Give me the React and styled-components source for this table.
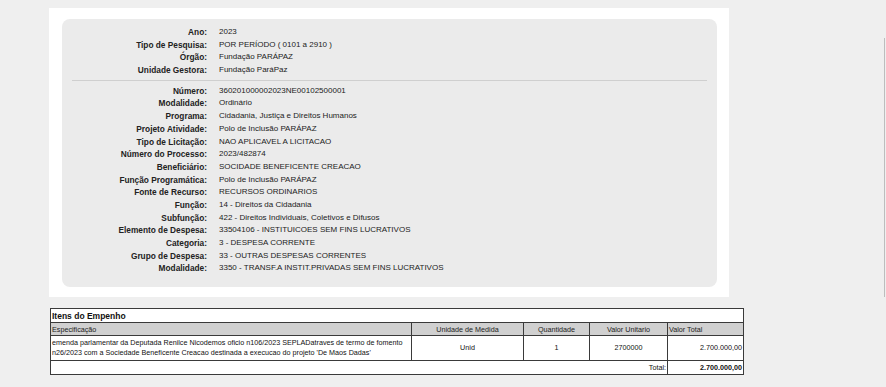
import React from "react";
import styled, { createGlobalStyle } from "styled-components";

const GlobalStyle = createGlobalStyle`
  html, body {
    margin: 0;
    padding: 0;
    background: #efefef;
    font-family: "Liberation Sans", Arial, sans-serif;
  }
`;

const cabecalho = [
  ["Ano", "2023"],
  ["Tipo de Pesquisa", "POR PERÍODO ( 0101 a 2910 )"],
  ["Órgão", "Fundação PARÁPAZ"],
  ["Unidade Gestora", "Fundação ParáPaz"],
];

const detalhes = [
  ["Número", "360201000002023NE00102500001"],
  ["Modalidade", "Ordinário"],
  ["Programa", "Cidadania, Justiça e Direitos Humanos"],
  ["Projeto Atividade", "Polo de Inclusão PARÁPAZ"],
  ["Tipo de Licitação", "NAO APLICAVEL A LICITACAO"],
  ["Número do Processo", "2023/482874"],
  ["Beneficiário", "SOCIDADE BENEFICENTE CREACAO"],
  ["Função Programática", "Polo de Inclusão PARÁPAZ"],
  ["Fonte de Recurso", "RECURSOS ORDINARIOS"],
  ["Função", "14 - Direitos da Cidadania"],
  ["Subfunção", "422 - Direitos Individuais, Coletivos e Difusos"],
  ["Elemento de Despesa", "33504106 - INSTITUICOES SEM FINS LUCRATIVOS"],
  ["Categoria", "3 - DESPESA CORRENTE"],
  ["Grupo de Despesa", "33 - OUTRAS DESPESAS CORRENTES"],
  ["Modalidade", "3350 - TRANSF.A INSTIT.PRIVADAS SEM FINS LUCRATIVOS"],
];

const App = () => {
  return (
    <>
      <GlobalStyle />
      <Page>
        <Panel>
          <Card>
            <Fields>
              {cabecalho.map(([label, value], i) => (
                <React.Fragment key={i}>
                  <Label>{label}:</Label>
                  <Value>{value}</Value>
                </React.Fragment>
              ))}
            </Fields>
            <Divider />
            <Fields>
              {detalhes.map(([label, value], i) => (
                <React.Fragment key={i}>
                  <Label>{label}:</Label>
                  <Value>{value}</Value>
                </React.Fragment>
              ))}
            </Fields>
          </Card>
        </Panel>

        <Itens>
          <colgroup>
            <col style={{ width: 361 }} />
            <col style={{ width: 112 }} />
            <col style={{ width: 66 }} />
            <col style={{ width: 78 }} />
            <col style={{ width: 76 }} />
          </colgroup>
          <tbody>
            <tr>
              <Titulo colSpan={5}>Itens do Empenho</Titulo>
            </tr>
            <tr>
              <Head>Especificação</Head>
              <Head $align="center">Unidade de Medida</Head>
              <Head $align="center">Quantidade</Head>
              <Head $align="center">Valor Unitario</Head>
              <Head>Valor Total</Head>
            </tr>
            <tr>
              <Cell $tall>
                emenda parlamentar da Deputada Renilce Nicodemos oficio n106/2023
                SEPLADatraves de termo de fomento n26/2023 com a Sociedade
                Beneficente Creacao destinada a execucao do projeto 'De Maos Dadas'
              </Cell>
              <Cell $align="center">Unid</Cell>
              <Cell $align="center">1</Cell>
              <Cell $align="center">2700000</Cell>
              <Cell $align="right">2.700.000,00</Cell>
            </tr>
            <tr>
              <Cell colSpan={4} $align="right">
                Total:
              </Cell>
              <Cell $align="right" $bold>
                2.700.000,00
              </Cell>
            </tr>
          </tbody>
        </Itens>
      </Page>
      <ScrollThumb />
    </>
  );
};

export default App;

const Page = styled.div`
  padding: 8px 0 0 49px;
  min-height: 387px;
  box-sizing: border-box;
`;

const Panel = styled.div`
  width: 680px;
  background: #ffffff;
  padding: 11px 12px 10px 13px;
  box-sizing: border-box;
`;

const Card = styled.div`
  background: #ebebeb;
  border-radius: 8px;
  padding: 7px 0 12px 0;
`;

const Fields = styled.div`
  display: grid;
  grid-template-columns: 145px 1fr;
  grid-auto-rows: 12.7px;
  column-gap: 12px;
  align-items: center;
  color: #222;
`;

const Label = styled.div`
  font-size: 8.3px;
  line-height: 12.7px;
  font-weight: bold;
  text-align: right;
  white-space: nowrap;
`;

const Value = styled.div`
  font-size: 8px;
  line-height: 12.7px;
  white-space: nowrap;
`;

const Divider = styled.div`
  height: 1px;
  background: #cfcfcf;
  margin: 3px 10px 4px 10px;
`;

const Itens = styled.table`
  margin: 11px 0 0 1px;
  width: 693px;
  border-collapse: collapse;
  table-layout: fixed;
  border: 1px solid #3a3a3a;
  background: #ffffff;
  font-size: 7.2px;
  color: #111;
`;

const Titulo = styled.td`
  height: 13px;
  padding: 0 0 0 1px;
  font-size: 8.5px;
  font-weight: bold;
  color: #111;
  border-bottom: 1px solid #3a3a3a;
`;

const Head = styled.td`
  height: 12px;
  padding: 0 1px;
  background: #d0d0d0;
  border: 1px solid #3a3a3a;
  text-align: ${(p) => p.$align || "left"};
  color: #222;
  white-space: nowrap;
`;

const Cell = styled.td`
  padding: ${(p) => (p.$tall ? "2px 1px" : "1px")};
  height: 11px;
  line-height: 10px;
  border: 1px solid #3a3a3a;
  text-align: ${(p) => p.$align || "left"};
  font-weight: ${(p) => (p.$bold ? "bold" : "normal")};
  vertical-align: middle;
`;

const ScrollThumb = styled.div`
  position: fixed;
  top: 38px;
  left: 884px;
  width: 1px;
  height: 259px;
  background: #bdbdbd;
`;
